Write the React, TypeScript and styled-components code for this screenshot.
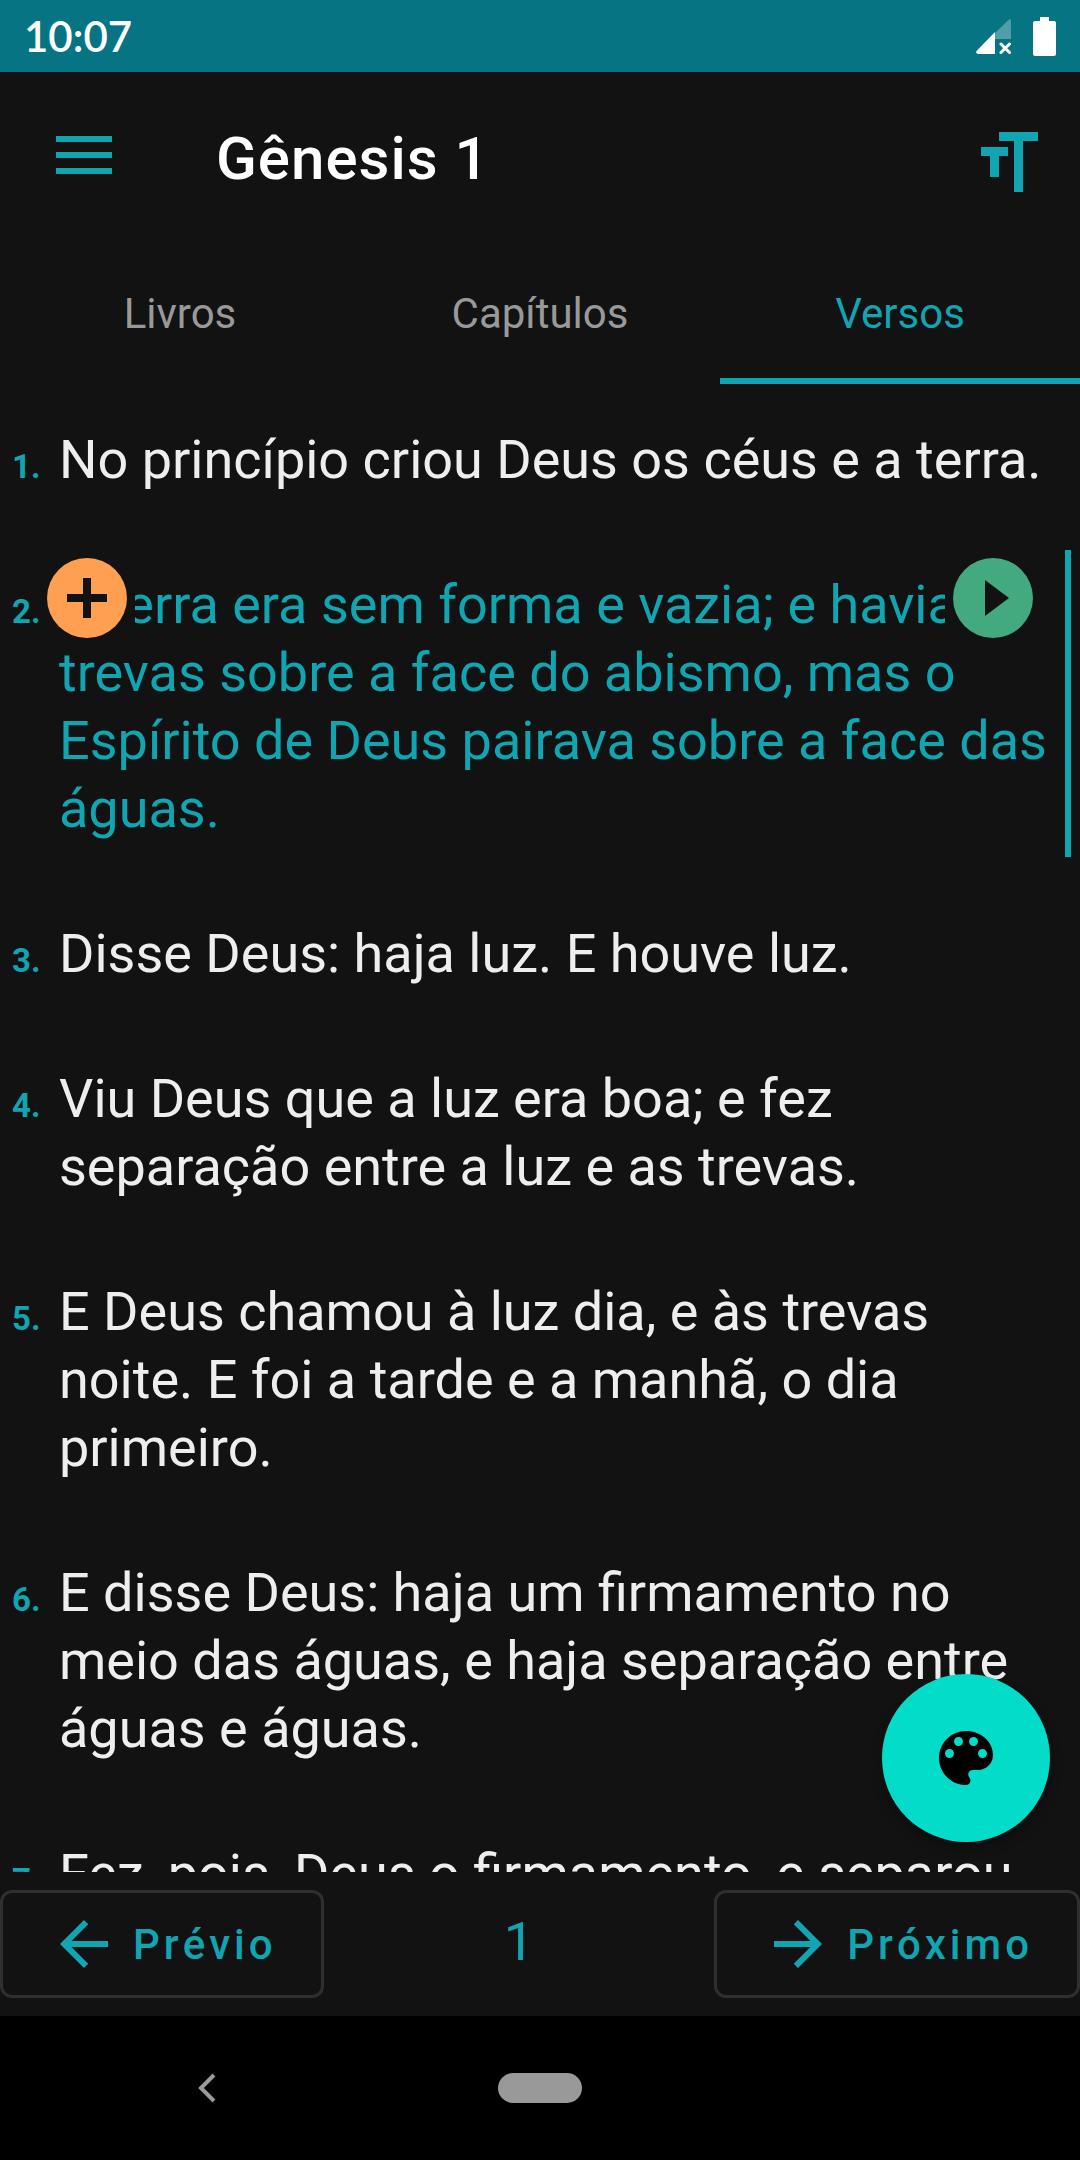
import React, { useState } from "react";
import styled, { createGlobalStyle } from "styled-components";

const color = {
  background: "#121212",
  status: "#067482",
  accent: "#11a4b1",
  text: "#eeeeee",
  muted: "#999999",
  outline: "#2f2f2f",
  fab: "#03dcc8",
  add: "#ff9f52",
  play: "#43aa80",
};

const GlobalStyle = createGlobalStyle`
  *, *::before, *::after { box-sizing: border-box; }
  body { margin: 0; background: ${color.background}; }
  button { font: inherit; color: inherit; background: none; border: 0; padding: 0; margin: 0; cursor: pointer; }
  svg { display: block; flex: none; }
`;

const Screen = styled.div`
  display: flex;
  flex-direction: column;
  height: 100vh;
  overflow: hidden;
  background: ${color.background};
  color: ${color.text};
  font-family: Roboto, "Noto Sans", sans-serif;
`;

const StatusBar = styled.div`
  display: flex;
  flex: none;
  align-items: center;
  justify-content: space-between;
  height: 72px;
  padding: 0 24px;
  background: ${color.status};
  color: #fff;
`;

const Clock = styled.time`
  font-family: Lato, sans-serif;
  font-size: 42px;
  font-weight: 600;
  line-height: 72px;
`;

const StatusIcons = styled.div`
  display: flex;
  align-items: center;
  gap: 22px;
`;

const AppBar = styled.header`
  display: flex;
  flex: none;
  align-items: center;
  height: 168px;
  padding: 0 42px 0 48px;
`;

const BarButton = styled.button`
  display: flex;
  align-items: center;
  justify-content: center;
  height: 72px;
  color: ${color.accent};
`;

const Title = styled.h1`
  flex: 1;
  margin: 0;
  padding: 6px 0 0 96px;
  color: #fff;
  font-size: 60px;
  font-weight: 500;
  letter-spacing: 1px;
  line-height: 72px;
`;

const Tabs = styled.div`
  display: grid;
  flex: none;
  grid-template-columns: repeat(3, 1fr);
  height: 144px;
`;

const Tab = styled.button<{ $active: boolean }>`
  padding-top: 10px;
  border-bottom: 6px solid ${(p) => (p.$active ? color.accent : "transparent")};
  color: ${(p) => (p.$active ? color.accent : color.muted)};
  font-size: 42px;
  line-height: 48px;
`;

const Reader = styled.main`
  position: relative;
  flex: 1;
  min-height: 0;
`;

const VerseList = styled.ol`
  height: 100%;
  margin: 0;
  padding: 0;
  overflow-y: auto;
  list-style: none;
  scrollbar-width: none;
`;

const Verse = styled.li<{ $selected: boolean }>`
  position: relative;
  display: grid;
  grid-template-columns: 47px 1fr;
  align-items: baseline;
  margin: 21px 9px;
  padding: 21px 16px 14px 3px;
  border-right: 6px solid ${(p) => (p.$selected ? color.accent : "transparent")};
  color: ${(p) => (p.$selected ? color.accent : color.text)};
  & + & { margin-top: 42px; }
`;

const VerseNumber = styled.span`
  color: ${color.accent};
  font-size: 33px;
  font-weight: 700;
`;

const VerseText = styled.p`
  margin: 0;
  font-size: 54px;
  line-height: 68px;
`;

const VerseAction = styled.button<{ $side: "left" | "right" }>`
  position: absolute;
  top: 0;
  ${(p) => (p.$side === "left" ? "left: 30px;" : "right: 24px;")}
  padding: 8px;
  background: ${color.background};
`;

const Disc = styled.span<{ $fill: string }>`
  display: flex;
  align-items: center;
  justify-content: center;
  width: 80px;
  height: 80px;
  border-radius: 50%;
  background: ${(p) => p.$fill};
  color: ${color.background};
`;

const Fab = styled.button`
  position: absolute;
  right: 30px;
  bottom: 30px;
  display: flex;
  align-items: center;
  justify-content: center;
  width: 168px;
  height: 168px;
  border-radius: 50%;
  background: ${color.fab};
  color: #000;
  box-shadow: 0 6px 12px rgba(0, 0, 0, 0.3);
`;

const Pager = styled.footer`
  display: flex;
  flex: none;
  align-items: center;
  height: 144px;
  color: ${color.accent};
`;

const PageButton = styled.button`
  display: flex;
  align-items: center;
  gap: 13px;
  height: 108px;
  padding: 0 44px 0 45px;
  border: 3px solid ${color.outline};
  border-radius: 12px;
  font-size: 42px;
  font-weight: 500;
  font-kerning: none;
  letter-spacing: 4px;
  line-height: 50px;
`;

const PageLabel = styled.span`
  padding-top: 2px;
`;

const PageNumber = styled.output`
  flex: 1;
  padding-bottom: 4px;
  font-size: 54px;
  line-height: 68px;
  text-align: center;
`;

const SystemBar = styled.nav`
  display: grid;
  flex: none;
  grid-template-columns: 1fr 84px 1fr;
  align-items: center;
  height: 144px;
  background: #000;
`;

const BackButton = styled.button`
  justify-self: center;
  padding: 0 84px 0 0;
  color: ${color.muted};
`;

const HomePill = styled.button`
  height: 30px;
  border-radius: 15px;
  background: ${color.muted};
`;

const SignalIcon = () => (
  <svg width="35" height="35" viewBox="0 0 35 35" aria-hidden="true">
    <path d="M19 14 33 0.5Q35 -0.5 35 1.5V20H19Z" fill="#fff" opacity="0.3" />
    <path d="M19 13V35H2Q-0.5 34.500 0.500 32Z" fill="#fff" />
    <path d="m25 25 8.500 8.500M33.500 25 25 33.500" stroke="#fff" strokeWidth="3" strokeLinecap="round" />
  </svg>
);

const BatteryIcon = () => (
  <svg width="23" height="39" viewBox="0 0 23 39" aria-hidden="true">
    <path d="M7 0h9v4h5q2 0 2 2v31q0 2-2 2H2q-2 0-2-2V6q0-2 2-2h5Z" fill="#fff" />
  </svg>
);

const MenuIcon = () => (
  <svg width="72" height="72" viewBox="0 0 72 72" fill="currentColor" aria-hidden="true">
    <path d="M8 16h56v6H8zM8 32h56v6H8zM8 48h56v6H8z" />
  </svg>
);

const TextSizeIcon = () => (
  <svg width="57" height="72" viewBox="0 0 57 72" fill="currentColor" aria-hidden="true">
    <path d="M18 12h39v9H42v51h-9V21H18zM0 27h27v9h-9v21H9V36H0z" />
  </svg>
);

const PlusIcon = () => (
  <svg width="40" height="40" viewBox="0 0 40 40" fill="currentColor" aria-hidden="true">
    <path d="M16 0h8v16h16v8H24v16h-8V24H0v-8h16z" />
  </svg>
);

const PlayIcon = () => (
  <svg width="40" height="40" viewBox="0 0 40 40" fill="currentColor" aria-hidden="true">
    <path d="M12 2v36l24-18z" />
  </svg>
);

const PaletteIcon = () => (
  <svg width="72" height="72" viewBox="0 0 24 24" fill="currentColor" aria-hidden="true">
    <path d="M12 3c-4.970 0-9 4.030-9 9s4.030 9 9 9c.83 0 1.500-.67 1.500-1.500 0-.39-.15-.74-.39-1.010-.23-.26-.38-.61-.38-.99 0-.83.67-1.500 1.500-1.500H16c2.760 0 5-2.240 5-5 0-4.420-4.030-8-9-8zm-5.500 9c-.83 0-1.500-.67-1.500-1.500S5.670 9 6.500 9 8 9.670 8 10.500 7.330 12 6.500 12zm3-4C8.670 8 8 7.330 8 6.500S8.670 5 9.500 5s1.500.67 1.500 1.500S10.330 8 9.500 8zm5 0c-.83 0-1.500-.67-1.500-1.500S13.670 5 14.500 5s1.500.67 1.500 1.500S15.330 8 14.500 8zm3 4c-.83 0-1.500-.67-1.500-1.500S16.670 9 17.500 9s1.500.67 1.500 1.500-.67 1.500-1.500 1.500z" />
  </svg>
);

const ArrowLeftIcon = () => (
  <svg width="72" height="72" viewBox="0 0 24 24" fill="currentColor" aria-hidden="true">
    <path d="M20 11H7.830l5.590-5.590L12 4l-8 8 8 8 1.410-1.410L7.830 13H20v-2z" />
  </svg>
);

const ArrowRightIcon = () => (
  <svg width="72" height="72" viewBox="0 0 24 24" fill="currentColor" aria-hidden="true">
    <path d="M12 4l-1.410 1.410L16.170 11H4v2h12.170l-5.580 5.590L12 20l8-8z" />
  </svg>
);

const ChevronIcon = () => (
  <svg width="18" height="30" viewBox="0 0 18 30" fill="none" aria-hidden="true">
    <path d="M16 2 3 15l13 13" stroke="currentColor" strokeWidth="4" />
  </svg>
);

const tabs = ["Livros", "Capítulos", "Versos"];

const verses = [
  "No princípio criou Deus os céus e a terra.",
  "A terra era sem forma e vazia; e havia trevas sobre a face do abismo, mas o Espírito de Deus pairava sobre a face das águas.",
  "Disse Deus: haja luz. E houve luz.",
  "Viu Deus que a luz era boa; e fez separação entre a luz e as trevas.",
  "E Deus chamou à luz dia, e às trevas noite. E foi a tarde e a manhã, o dia primeiro.",
  "E disse Deus: haja um firmamento no meio das águas, e haja separação entre águas e águas.",
  "Fez, pois, Deus o firmamento, e separou",
];

export default function App() {
  const [activeTab, setActiveTab] = useState("Versos");
  const [selected, setSelected] = useState(2);

  return (
    <Screen>
      <GlobalStyle />
      <StatusBar>
        <Clock>10:07</Clock>
        <StatusIcons>
          <SignalIcon />
          <BatteryIcon />
        </StatusIcons>
      </StatusBar>
      <AppBar>
        <BarButton aria-label="Menu"><MenuIcon /></BarButton>
        <Title>Gênesis 1</Title>
        <BarButton aria-label="Tamanho do texto"><TextSizeIcon /></BarButton>
      </AppBar>
      <Tabs role="tablist">
        {tabs.map((name) => (
          <Tab
            key={name}
            role="tab"
            aria-selected={name === activeTab}
            $active={name === activeTab}
            onClick={() => setActiveTab(name)}
          >
            {name}
          </Tab>
        ))}
      </Tabs>
      <Reader>
        <VerseList>
          {verses.map((text, index) => {
            const number = index + 1;
            const isSelected = number === selected;
            return (
              <Verse key={number} $selected={isSelected} onClick={() => setSelected(number)}>
                <VerseNumber>{number}.</VerseNumber>
                <VerseText>{text}</VerseText>
                {isSelected && (
                  <>
                    <VerseAction $side="left" aria-label="Adicionar">
                      <Disc $fill={color.add}><PlusIcon /></Disc>
                    </VerseAction>
                    <VerseAction $side="right" aria-label="Ouvir">
                      <Disc $fill={color.play}><PlayIcon /></Disc>
                    </VerseAction>
                  </>
                )}
              </Verse>
            );
          })}
        </VerseList>
        <Fab aria-label="Cores"><PaletteIcon /></Fab>
      </Reader>
      <Pager>
        <PageButton><ArrowLeftIcon /><PageLabel>Prévio</PageLabel></PageButton>
        <PageNumber>1</PageNumber>
        <PageButton><ArrowRightIcon /><PageLabel>Próximo</PageLabel></PageButton>
      </Pager>
      <SystemBar>
        <BackButton aria-label="Voltar"><ChevronIcon /></BackButton>
        <HomePill aria-label="Início" />
      </SystemBar>
    </Screen>
  );
}
